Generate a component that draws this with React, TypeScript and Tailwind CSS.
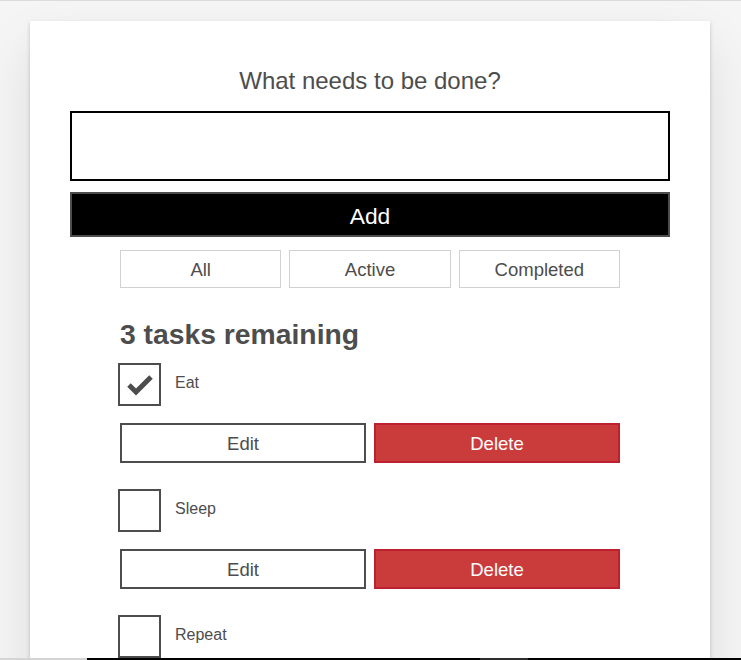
import React from 'react';

interface Task {
  id: string;
  name: string;
  completed: boolean;
}

const TASKS: Task[] = [
  { id: 'todo-0', name: 'Eat', completed: true },
  { id: 'todo-1', name: 'Sleep', completed: false },
  { id: 'todo-2', name: 'Repeat', completed: false },
];

const FILTERS = ['All', 'Active', 'Completed'];

const Checkbox: React.FC<{ checked: boolean }> = ({ checked }) => (
  <div className="relative -ml-[2px] h-[43px] w-[43px] shrink-0 border-2 border-[#4d4d4d] bg-white">
    {checked && (
      <svg className="absolute left-0 top-0" width="39" height="39" viewBox="0 0 39 39">
        <polyline points="9,20 16,27 31,12" fill="none" stroke="#4d4d4d" strokeWidth="5" strokeLinecap="butt" strokeLinejoin="miter" />
      </svg>
    )}
  </div>
);

const TodoItem: React.FC<{ task: Task }> = ({ task }) => (
  <li className="flex flex-col gap-4">
    <div className="flex min-h-[44px] items-start">
      <Checkbox checked={task.completed} />
      <label className="pl-[14px] pt-[10px] text-[16px] leading-5">{task.name}</label>
    </div>
    <div className="flex gap-2">
      <button className="h-10 flex-1 border-2 border-[#4d4d4d] bg-white pt-[2px] text-[18.5px] text-[#4d4d4d]">Edit</button>
      <button className="h-10 flex-1 border-2 border-[#bd2130] bg-[#ca3c3c] pt-[2px] text-[18.5px] text-white">Delete</button>
    </div>
  </li>
);

export default function App() {
  return (
    <div className="relative h-[660px] overflow-hidden bg-[#f5f5f5] text-[#4d4d4d]" style={{ fontFamily: '"Liberation Sans", Arial, sans-serif' }}>
      <div className="h-px bg-[#dcdcdc]" />
      <div className="ml-[30px] mt-5 w-[680px] bg-white p-10 shadow-[0_2px_4px_0_rgba(0,0,0,0.2),0_25px_50px_0_rgba(0,0,0,0.1)]">
        <form className="flex flex-col">
          <h2 className="mb-[10px] py-2 text-center text-[24px] font-normal leading-6">What needs to be done?</h2>
          <input type="text" className="h-[70px] w-full border-2 border-black px-5 outline-none" />
          <button type="button" className="mt-[11px] h-[45px] w-full border-2 border-[#4d4d4d] bg-black pt-[3px] text-[22.8px] text-white">Add</button>
        </form>
        <div className="mx-auto mt-[13px] flex w-[500px] gap-2">
          {FILTERS.map(f => (
            <button key={f} className="h-[38px] flex-1 border border-[#d1d1d1] bg-white pt-[2px] text-[18.5px] text-[#4d4d4d]">{f}</button>
          ))}
        </div>
        <div className="mx-auto w-[500px]">
          <h2 className="mt-[29px] mb-[11px] text-[28.3px] font-bold leading-[35px]">3 tasks remaining</h2>
          <ul className="flex flex-col gap-[26px]">
            {TASKS.map(t => <TodoItem key={t.id} task={t} />)}
          </ul>
        </div>
      </div>
      <div className="absolute bottom-0 left-0 right-0 flex h-[2px]">
        <div className="w-[87px] bg-[#d4d4d4]" />
        <div className="w-[393px] bg-black" />
        <div className="w-[48px] bg-[#2e2e2e]" />
        <div className="flex-1 bg-black" />
      </div>
    </div>
  );
}
